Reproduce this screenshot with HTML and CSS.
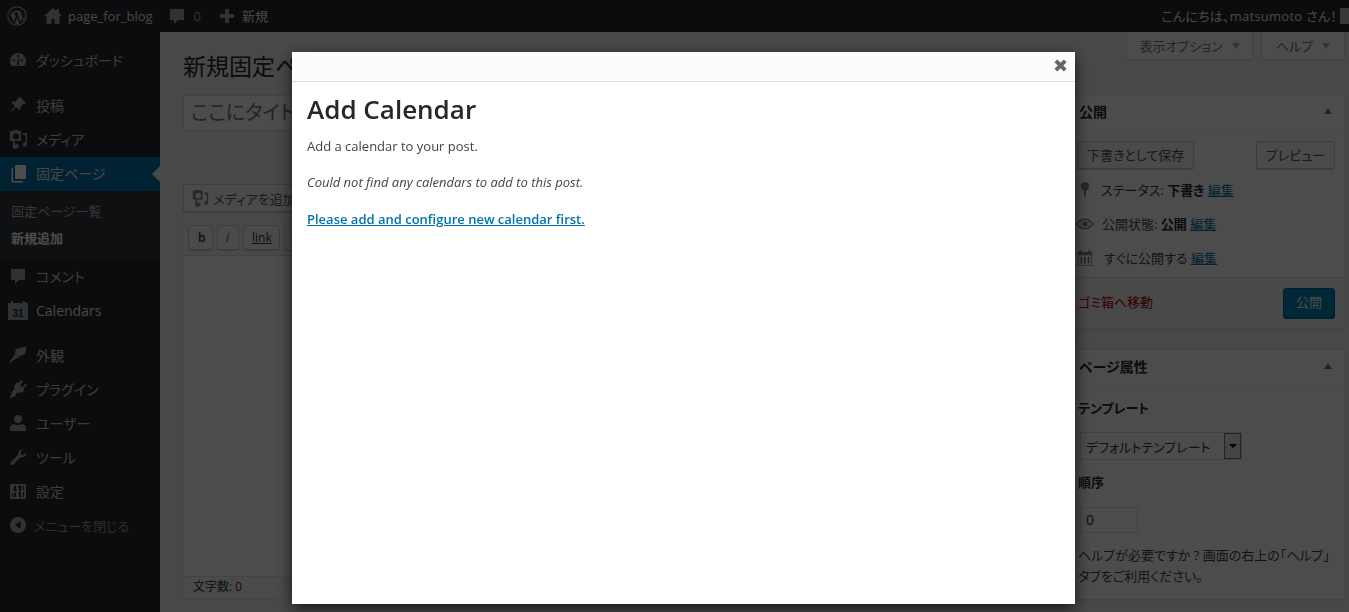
FILE: index.html
```html
<!DOCTYPE html>
<html lang="ja">
<head>
    <meta charset="UTF-8">
    <title>新規固定ページを追加</title>
    <link rel="stylesheet" href="styles.css">
</head>
<body>
    <div class="adminbar">
        <div class="bar-left">
            <svg class="bar-logo" viewBox="0 0 20 20"><circle cx="10" cy="10" r="9.2" fill="none" stroke="currentColor" stroke-width="1.2"/><path d="M3 7.2l3.6 9.6 2.2-6.2-1.2-3.4H6.6V6.4h5v.8h-1.2l3.3 9.3 1.1-3.5c.6-1.9.4-3.300-.5-4.500-.4-.7-.3-1.500.5-1.700-1.400-1.300-3.100-2.200-4.800-2.200-2.600 0-4.900 1.300-6.300 3.400z" fill="currentColor"/><path d="M10.100 11.300l-2.300 6.400c1.500.5 3.100.4 4.500 0zM16.900 7.300c.5 2.200.1 4.200-2.100 8.800 2.800-1.800 3.700-5.500 2.100-8.800z" fill="currentColor"/></svg>
            <span class="bar-item">
                <svg class="bar-icon" viewBox="0 0 20 20"><path d="M10 2L1 10h2.500v8h5v-5h3v5h5v-8H19l-3-2.700V3h-2.500v2.100z"/></svg>
                page_for_blog
            </span>
            <span class="bar-item bar-num">
                <svg class="bar-icon" viewBox="0 0 20 20"><path d="M3 3h14v11h-6l-4 4v-4H3z"/></svg>
                <span class="bar-count">0</span>
            </span>
            <span class="bar-item">
                <svg class="bar-icon" viewBox="0 0 20 20"><path d="M8 3h4v5h5v4h-5v5H8v-5H3V8h5z"/></svg>
                新規
            </span>
        </div>
        <div class="bar-right">
            <span class="howdy">こんにちは、matsumoto さん！</span>
            <span class="avatar"></span>
        </div>
    </div>

    <div class="layout">
        <nav class="sidemenu">
            <a class="menu-item gap-below">
                <svg viewBox="0 0 20 20"><path d="M10 3a8 8 0 0 0-8 8c0 2 .7 3.800 1.800 5h12.400A8 8 0 0 0 10 3zm-.9 2h1.800v2H9.100zM5 9.500h2v1.800H5zm8 0h2v1.800h-2zm-2 5.500H9l.400-3.500 1.800-3.700.500.200-.900 3.700z"/></svg>
                ダッシュボード
            </a>
            <a class="menu-item">
                <svg viewBox="0 0 20 20"><path d="M12 2l6 6-1.500 1-1-.300-3.200 3.200c.4 1.400.1 2.700-.8 3.600L8 11.900 3 17l-.6-.4L7 11 3.500 7.500c.9-.9 2.200-1.200 3.600-.8l3.200-3.200-.3-1z"/></svg>
                投稿
            </a>
            <a class="menu-item">
                <svg viewBox="0 0 20 20"><path d="M5 2l1-1h4l1 1h2v10H2V2zm3 2.500a3 3 0 1 0 0 6 3 3 0 0 0 0-6zM15 4h4v11.500a2.200 2.200 0 1 1-1.500-2V6H15zM9 19a2 2 0 1 0-2-2.800V13h-.5v-1H5v4.500A2.200 2.200 0 1 0 9 19z"/></svg>
                メディア
            </a>
            <a class="menu-item current">
                <svg viewBox="0 0 20 20"><path d="M7 2h11v14H7zM5 5v13h10v1.500H3.500V5z"/></svg>
                固定ページ
            </a>
            <div class="submenu">
                <a>固定ページ一覧</a>
                <a class="sub-current">新規追加</a>
            </div>
            <a class="menu-item">
                <svg viewBox="0 0 20 20"><path d="M3 3h14v11h-6l-4 4v-4H3z"/></svg>
                コメント
            </a>
            <a class="menu-item gap-below calendars">
                <svg viewBox="0 0 20 20"><path d="M0 3h3V1h2v2h10V1h2v2h3v17H0z"/><text x="10" y="16.500" class="cal-num">31</text></svg>
                Calendars
            </a>
            <a class="menu-item">
                <svg viewBox="0 0 20 20"><path d="M8 4l9-2.500 1.500 1.500-2 7-4 .5-1 2-4.500-4.500zM7 8.500l4 4-3 1-2 1.500-4 3-.500-.500 2.500-4 1.500-2.500z"/></svg>
                外観
            </a>
            <a class="menu-item">
                <svg viewBox="0 0 20 20"><path d="M13 1l2 1.500-3 3.500 2.500 2 3-3.500L19 6l-3.500 4 1 1-2 2c-1.500 1-3.200 1-4.500.300L7 16l1 1-1 1-1-1-3 2.500L1.500 18 4 15l-1-1 1-1 2.500-3c-.6-1.400-.5-3 .5-4.500l2-2 1 1z"/></svg>
                プラグイン
            </a>
            <a class="menu-item">
                <svg viewBox="0 0 20 20"><circle cx="10" cy="6" r="4"/><path d="M2 18v-3c0-2 1.500-3.500 4-4 1 .7 2.500 1 4 1s3-.3 4-1c2.500.5 4 2 4 4v3z"/></svg>
                ユーザー
            </a>
            <a class="menu-item">
                <svg viewBox="0 0 20 20"><path d="M18 5.500c.5 3-2 5.500-5.500 4.800L6 17c-1 1-2 1.500-3 .500s-.5-2 .500-3l6.700-6.700C9.500 5 12 2 15 2.500l-2.500 2.500.5 2.500 2.500.5z"/></svg>
                ツール
            </a>
            <a class="menu-item">
                <svg viewBox="0 0 20 20"><path fill-rule="evenodd" d="M2 3h16v15H2zM6 5v3.500H4.500L7 11l2.500-2.500H8V5zM6 12v4h2v-4zm6-8l-2.500 2.500H11V10h2V6.500h1.500zM11 11v5h2v-5zm4-6v4h1V5zm0 6v5h1v-5zM4 12v4h1v-4z"/></svg>
                設定
            </a>
            <a class="menu-item collapse">
                <svg viewBox="0 0 20 20"><path fill-rule="evenodd" d="M10 2a8 8 0 1 1 0 16 8 8 0 0 1 0-16zm2.500 4L7 10l5.500 4z"/></svg>
                メニューを閉じる
            </a>
        </nav>

        <main class="content">
            <div class="columns">
                <div class="col-main">
                    <h1 class="page-title">新規固定ページを追加</h1>
                    <div class="title-input">ここにタイト</div>
                    <div class="media-btn">
                        <svg viewBox="0 0 20 20"><path d="M5 2l1-1h4l1 1h2v10H2V2zm3 2.500a3 3 0 1 0 0 6 3 3 0 0 0 0-6zM15 4h4v11.500a2.200 2.200 0 1 1-1.500-2V6H15zM9 19a2 2 0 1 0-2-2.800V13h-.5v-1H5v4.500A2.200 2.200 0 1 0 9 19z"/></svg>
                        メディアを追加
                    </div>
                    <div class="editor">
                        <div class="toolbar">
                            <span class="tool tool-b">b</span>
                            <span class="tool tool-i">i</span>
                            <span class="tool tool-link">link</span>
                            <span class="tool">b-quote</span>
                        </div>
                        <div class="editor-area"></div>
                        <div class="word-count">文字数: <span>0</span></div>
                    </div>
                </div>

                <aside class="col-side">
                    <div class="screen-tabs">
                        <span class="screen-tab">表示オプション <i class="arrow-down"></i></span>
                        <span class="screen-tab">ヘルプ <i class="arrow-down"></i></span>
                    </div>
                    <section class="postbox publish-box">
                        <h2 class="box-head">公開 <i class="arrow-up"></i></h2>
                        <div class="pub-actions">
                            <span class="btn">下書きとして保存</span>
                            <span class="btn">プレビュー</span>
                        </div>
                        <div class="pub-row">
                            <svg viewBox="0 0 20 20"><circle cx="10" cy="6" r="4.500"/><path d="M9 9h2v7l-1 3-1-3z"/></svg>
                            <span>ステータス: <b>下書き</b> <a>編集</a></span>
                        </div>
                        <div class="pub-row row-visibility">
                            <svg viewBox="0 0 20 20"><path fill-rule="evenodd" d="M10 4c4.500 0 8 3 10 6-2 3-5.500 6-10 6S2 13 0 10c2-3 5.500-6 10-6zm0 1.500a4.500 4.500 0 1 0 0 9 4.500 4.500 0 0 0 0-9zM2 10c1.200 1.400 2.500 2.600 4 3.400a5.500 5.500 0 0 1 0-6.800C4.500 7.400 3.200 8.600 2 10zm16 0c-1.200-1.400-2.500-2.600-4-3.400a5.500 5.500 0 0 1 0 6.800c1.500-.8 2.800-2 4-3.400zM10 7a3 3 0 1 1 0 6 3 3 0 0 1 0-6z"/></svg>
                            <span>公開状態: <b>公開</b> <a>編集</a></span>
                        </div>
                        <div class="pub-row row-schedule">
                            <svg viewBox="0 0 20 20"><path fill-rule="evenodd" d="M2 3h2V1h2v2h8V1h2v2h2v16H2zm1 4v11h14V7zm2 2h2v7H5zm4 0h2v7H9zm4 0h2v7h-2z"/></svg>
                            <span>すぐに公開する <a>編集</a></span>
                        </div>
                        <div class="pub-footer">
                            <a class="trash">ゴミ箱へ移動</a>
                            <span class="btn btn-primary">公開</span>
                        </div>
                    </section>

                    <section class="postbox attr-box">
                        <h2 class="box-head">ページ属性 <i class="arrow-up"></i></h2>
                        <div class="attr-body">
                            <p class="attr-label attr-first">テンプレート</p>
                            <div class="select-box">
                                <span>デフォルトテンプレート</span>
                                <span class="select-arrow"><i></i></span>
                            </div>
                            <p class="attr-label">順序</p>
                            <div class="num-input">0</div>
                            <p class="attr-help">ヘルプが必要ですか ? 画面の右上の「ヘルプ」<br>タブをご利用ください。</p>
                        </div>
                    </section>
                </aside>
            </div>
        </main>
    </div>

    <div class="overlay"></div>

    <div class="modal">
        <div class="modal-head"><span class="modal-close">✖</span></div>
        <div class="modal-body">
            <h1>Add Calendar</h1>
            <p>Add a calendar to your post.</p>
            <p><em>Could not find any calendars to add to this post.</em></p>
            <p><a href="#">Please add and configure new calendar first.</a></p>
        </div>
    </div>
</body>
</html>
```

FILE: styles.css
```css
* {
    box-sizing: border-box;
}
html, body {
    height: 100%;
}
body {
    margin: 0;
    overflow: hidden;
    background: #f1f1f1;
    color: #444;
    font-family: "Open Sans", "Noto Sans CJK JP", sans-serif;
    font-size: 13px;
    font-feature-settings: "palt";
}

/* admin bar */
.adminbar {
    display: flex;
    justify-content: space-between;
    height: 32px;
    background: #23282d;
    color: #eee;
    font-size: 13px;
    line-height: 32px;
}
.bar-left, .bar-item, .bar-right {
    display: flex;
    align-items: center;
}
.bar-logo {
    width: 20px;
    height: 20px;
    margin: 0 16px 0 7px;
    color: #a0a5aa;
}
.bar-item {
    gap: 5px;
    margin-right: 14px;
}
.bar-icon {
    width: 20px;
    height: 20px;
    flex: none;
    fill: #a0a5aa;
}
.bar-count {
    color: #a0a5aa;
    margin-left: 2px;
    margin-right: 2px;
}
.bar-right {
    gap: 3px;
}
.howdy {
    letter-spacing: 0.25px;
}
.avatar {
    width: 9px;
    height: 16px;
    background: #bbb;
}

/* side menu */
.layout {
    display: flex;
    height: calc(100% - 32px);
}
.sidemenu {
    width: 160px;
    flex: none;
    padding-top: 12px;
    background: #23282d;
}
.menu-item {
    display: flex;
    align-items: center;
    height: 34px;
    padding: 0 0 2px 8px;
    gap: 8px;
    color: #ccc;
    font-size: 14px;
    position: relative;
}
.menu-item svg {
    width: 20px;
    height: 20px;
    flex: none;
    fill: #a0a5aa;
}
.gap-below {
    margin-bottom: 11px;
}
.calendars {
    color: #eee;
}
.current {
    background: #0073aa;
    color: #eee;
}
.current svg {
    fill: #fff;
}
.current::after {
    content: "";
    position: absolute;
    right: 0;
    top: 9px;
    border: 8px solid transparent;
    border-right-color: #f1f1f1;
    border-left-width: 0;
}
.cal-num {
    font-family: "Liberation Sans", sans-serif;
    font-size: 10px;
    font-weight: bold;
    fill: #23282d;
    text-anchor: middle;
}
.collapse {
    color: #999;
    font-size: 13px;
    gap: 6px;
}
.submenu {
    display: flex;
    flex-direction: column;
    height: 69px;
    padding: 10px 0 0 11px;
    background: #32373c;
    color: #b4b9be;
}
.submenu a {
    height: 27px;
    line-height: 20px;
}
.sub-current {
    color: #fff;
    font-weight: bold;
}

/* page content */
.content {
    flex: 1;
    padding: 0 4px 0 23px;
    min-width: 0;
}
.screen-tabs {
    display: flex;
    justify-content: flex-end;
    gap: 8px;
    height: 28px;
    margin-bottom: 34px;
}
.screen-tab {
    display: flex;
    align-items: center;
    justify-content: center;
    gap: 9px;
    width: 127px;
    background: #fff;
    border: 1px solid #ddd;
    border-top: 0;
    color: #777;
    font-size: 13px;
    box-shadow: 0 1px 1px rgba(0, 0, 0, 0.04);
}
.screen-tab:last-child {
    width: 84px;
}
.arrow-down {
    border: 4.500px solid transparent;
    border-top: 6px solid #aaa;
    border-bottom: 0;
}
.columns {
    display: flex;
    gap: 20px;
}
.col-main {
    flex: 1;
    min-width: 0;
}
.col-side {
    width: 280px;
    flex: none;
}
.page-title {
    margin: 0;
    padding-top: 20px;
    height: 63px;
    line-height: 28px;
    color: #23282d;
    font-size: 23px;
    font-weight: 400;
    white-space: nowrap;
}
.title-input {
    height: 36px;
    margin-bottom: 53px;
    padding-left: 7px;
    background: #fff;
    border: 1px solid #ddd;
    color: #72777c;
    font-size: 20px;
    line-height: 34px;
}
.media-btn {
    display: inline-flex;
    align-items: center;
    gap: 4px;
    height: 28px;
    padding: 0 10px 0 7px;
    background: #f7f7f7;
    border: 1px solid #ccc;
    border-radius: 3px;
    color: #555;
    font-size: 13px;
    box-shadow: 0 1px 0 #ccc;
}
.media-btn svg {
    width: 18px;
    height: 18px;
    fill: #82878c;
}
.editor {
    height: 381px;
    margin-top: 7px;
    display: flex;
    flex-direction: column;
    background: #fff;
    border: 1px solid #e5e5e5;
}
.toolbar {
    display: flex;
    gap: 4px;
    height: 36px;
    padding: 5px 0 0 4px;
    border-bottom: 1px solid #e5e5e5;
    background: #f5f5f5;
}
.tool {
    height: 25px;
    padding: 0 9px;
    background: #f7f7f7;
    border: 1px solid #ccc;
    border-radius: 3px;
    color: #32373c;
    font-size: 12px;
    line-height: 23px;
    box-shadow: 0 1px 0 #ccc;
}
.tool-b {
    font-weight: 600;
    width: 25px;
}
.tool-i {
    font-style: italic;
    width: 22px;
    padding: 0 8px;
}
.tool-link {
    text-decoration: underline;
    width: 37px;
    padding: 0 8px;
}
.editor-area {
    flex: 1;
}
.word-count {
    height: 23px;
    padding-left: 9px;
    background: #f7f7f7;
    border-top: 1px solid #e5e5e5;
    color: #32373c;
    font-size: 12px;
    line-height: 20px;
}
.word-count span {
    color: #a00;
}

/* meta boxes */
.postbox {
    background: #fff;
    border: 1px solid #e5e5e5;
    box-shadow: 0 1px 1px rgba(0, 0, 0, 0.04);
}
.publish-box {
    height: 235px;
    margin-bottom: 20px;
}
.attr-box {
    height: 251px;
}
.box-head {
    display: flex;
    justify-content: space-between;
    align-items: center;
    height: 36px;
    margin: 0;
    padding: 0 12px 3px 13px;
    border-bottom: 1px solid #eee;
    color: #23282d;
    font-size: 14px;
    font-weight: bold;
}
.arrow-up {
    border: 4px solid transparent;
    border-bottom: 6px solid #72777c;
    border-top: 0;
}
.pub-actions {
    display: flex;
    justify-content: space-between;
    padding: 10px 9px 0 11px;
    margin-bottom: 4px;
}
.btn {
    height: 28px;
    padding: 0 9px;
    background: #f7f7f7;
    border: 1px solid #ccc;
    border-radius: 3px;
    color: #555;
    font-size: 13px;
    line-height: 26px;
    box-shadow: 0 1px 0 #ccc;
}
.pub-row {
    display: flex;
    align-items: center;
    gap: 7px;
    height: 34px;
    padding: 0 0 1px 10px;
    font-size: 13px;
}
.row-visibility {
    gap: 8px;
}
.row-schedule {
    gap: 10px;
}
.pub-row svg {
    width: 18px;
    height: 18px;
    flex: none;
    fill: #82878c;
}
.pub-row a {
    color: #0073aa;
    text-decoration: underline;
}
.pub-row b {
    color: #23282d;
}
.pub-footer {
    display: flex;
    justify-content: space-between;
    align-items: center;
    height: 51px;
    margin-top: 2px;
    padding: 0 9px 0 12px;
    background: #f5f5f5;
    border-top: 1px solid #ddd;
}
.trash {
    color: #a00;
    margin-bottom: 3px;
}
.btn-primary {
    height: 30px;
    padding: 0 12px;
    background: #0085ba;
    border-color: #006799;
    color: #fff;
    line-height: 27px;
    box-shadow: 0 1px 0 #006799;
}
.attr-body {
    padding: 0 6px 0 12px;
}
.attr-label {
    margin: 0;
    height: 18px;
    line-height: 18px;
    color: #23282d;
    font-weight: bold;
    font-size: 13px;
}
.attr-first {
    margin-top: 13px;
}
.select-box {
    display: flex;
    justify-content: space-between;
    align-items: center;
    width: 162px;
    height: 28px;
    margin: 15px 0 13px 2px;
    padding-left: 5px;
    border: 1px solid #ddd;
    background: #fff;
    color: #32373c;
    font-size: 13px;
    white-space: nowrap;
}
.select-arrow {
    display: flex;
    align-items: center;
    justify-content: center;
    width: 17px;
    height: 26px;
    background: #e8e8e8;
    border: 1px solid #777;
}
.select-arrow i {
    border: 4px solid transparent;
    border-top: 4px solid #000;
    border-bottom: 0;
}
.num-input {
    width: 58px;
    height: 26px;
    margin: 16px 0 12px 2px;
    padding-left: 5px;
    border: 1px solid #ddd;
    color: #32373c;
    font-size: 14px;
    line-height: 24px;
}
.attr-help {
    margin: 0;
    font-size: 13px;
    line-height: 21px;
    white-space: nowrap;
}

/* dimmed page and dialog */
.overlay {
    position: fixed;
    inset: 0;
    background: rgba(0, 0, 0, 0.7);
}
.modal {
    position: fixed;
    left: 292px;
    top: 52px;
    width: 783px;
    height: 552px;
    background: #fff;
    box-shadow: 0 5px 15px rgba(0, 0, 0, 0.7);
}
.modal-head {
    display: flex;
    justify-content: flex-end;
    align-items: center;
    height: 30px;
    padding: 0 7px 2px 0;
    background: #fcfcfc;
    border-bottom: 1px solid #ddd;
}
.modal-close {
    color: #666;
    font-family: "DejaVu Sans", sans-serif;
    font-size: 18px;
    font-weight: bold;
}
.modal-body {
    padding: 0 15px;
}
.modal-body h1 {
    margin: 10px 0 0;
    color: #23282d;
    font-size: 26px;
    font-weight: 600;
    line-height: 34px;
}
.modal-body p {
    margin: 0 0 17px;
    line-height: 20px;
}
.modal-body h1 + p {
    margin: 10px 0 16px;
}
.modal-body a {
    color: #0073aa;
    font-weight: 600;
}
```
